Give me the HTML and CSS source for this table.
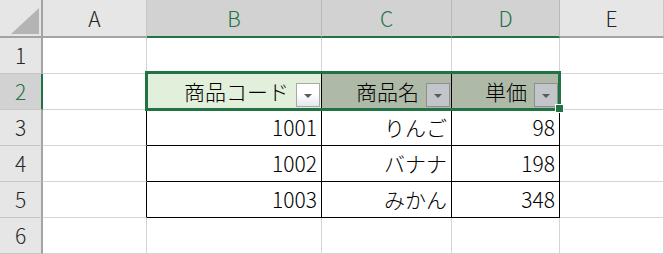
FILE: index.html
```html
<!DOCTYPE html>
<html lang="ja">
<head>
<meta charset="utf-8">
<link rel="stylesheet" href="styles.css">
</head>
<body>
<div class="sheet">
  <div class="grid">
    <div class="corner"><svg class="corner-tri" width="41" height="36" viewBox="0 0 41 36"><polygon points="11,34 39,34 39,8" fill="#b4b4b4"/></svg></div>
    <div class="ch">A</div>
    <div class="ch sel">B</div>
    <div class="ch sel">C</div>
    <div class="ch sel">D</div>
    <div class="ch">E</div>

    <div class="rh">1</div>
    <div class="c"></div><div class="c"></div><div class="c"></div><div class="c"></div><div class="c"></div>

    <div class="rh rsel">2</div>
    <div class="c"></div>
    <div class="c hd act bk-r"><span>商品コード</span><span class="fbtn light"><svg width="8" height="4" viewBox="0 0 8 4"><polygon points="0,0 8,0 4,4" fill="#5a5a5a"/></svg></span></div>
    <div class="c hd ov bk-r"><span>商品名</span><span class="fbtn"><svg width="8" height="4" viewBox="0 0 8 4"><polygon points="0,0 8,0 4,4" fill="#5a5a5a"/></svg></span></div>
    <div class="c hd ov"><span>単価</span><span class="fbtn"><svg width="8" height="4" viewBox="0 0 8 4"><polygon points="0,0 8,0 4,4" fill="#5a5a5a"/></svg></span></div>
    <div class="c"></div>

    <div class="rh">3</div>
    <div class="c bk-r"></div>
    <div class="c num tb">1001</div>
    <div class="c num tb">りんご</div>
    <div class="c num tb">98</div>
    <div class="c"></div>

    <div class="rh">4</div>
    <div class="c bk-r"></div>
    <div class="c num tb">1002</div>
    <div class="c num tb">バナナ</div>
    <div class="c num tb">198</div>
    <div class="c"></div>

    <div class="rh">5</div>
    <div class="c bk-r"></div>
    <div class="c num tb">1003</div>
    <div class="c num tb">みかん</div>
    <div class="c num tb">348</div>
    <div class="c"></div>

    <div class="rh">6</div>
    <div class="c"></div><div class="c"></div><div class="c"></div><div class="c"></div><div class="c"></div>
  </div>
  <div class="selection"></div>
  <div class="handle"></div>
</div>
</body>
</html>
```
FILE: styles.css
```css
html, body {
  margin: 0;
  padding: 0;
  background: #ffffff;
  overflow: hidden;
}

.sheet {
  position: relative;
  width: 664px;
  height: 254px;
  font-family: "Noto Sans CJK JP", "Noto Sans", sans-serif;
  font-weight: 300;
  font-size: 21px;
  color: #000;
}

.grid {
  display: grid;
  grid-template-columns: 43px 104px 175px 130px 108px 104px;
  grid-template-rows: 38px repeat(6, 36px);
}

.grid > div {
  box-sizing: border-box;
}

.corner {
  background: #e6e6e6;
  border-right: 2px solid #a3a3a3;
  border-bottom: 2px solid #a3a3a3;
}

.corner-tri {
  display: block;
}

.ch {
  background: #e6e6e6;
  border-right: 1px solid #c6c6c6;
  border-bottom: 2px solid #a3a3a3;
  display: flex;
  align-items: center;
  justify-content: center;
  color: #262626;
  line-height: 1;
}

.ch.sel {
  background: #d2d2d2;
  color: #217346;
  border-bottom-color: #217346;
  border-right-color: #b9b9b9;
}

.rh {
  background: #e6e6e6;
  border-right: 2px solid #a3a3a3;
  border-bottom: 1px solid #c6c6c6;
  display: flex;
  align-items: center;
  justify-content: center;
  color: #262626;
  line-height: 1;
}

.rh.rsel {
  background: #d2d2d2;
  color: #217346;
  border-right-color: #217346;
}

.c {
  border-right: 1px solid #d4d4d4;
  border-bottom: 1px solid #d4d4d4;
  display: flex;
  align-items: center;
  justify-content: flex-end;
  line-height: 1;
}

.num {
  padding-right: 4px;
}

.tb {
  border-right-color: #000;
  border-bottom-color: #000;
}

.bk-r {
  border-right-color: #000;
}

.hd {
  gap: 7px;
  color: #000;
  padding-right: 1px;
}

.act {
  background: #e2efda;
}

.ov {
  background: #aebaa7;
}

.fbtn {
  box-sizing: border-box;
  width: 24px;
  height: 24px;
  align-self: flex-end;
  margin-bottom: 2px;
  border: 1px solid #8e8e8e;
  background: #c2c5c9;
  display: flex;
  align-items: center;
  justify-content: center;
}

.fbtn svg {
  display: block;
  margin-top: 2px;
}

.fbtn.light {
  border-color: #a8a8a8;
  background: linear-gradient(#ffffff 0%, #ffffff 45%, #e4e9ee 100%);
}

.selection {
  position: absolute;
  left: 145px;
  top: 71px;
  width: 416px;
  height: 40px;
  box-sizing: border-box;
  border: 3px solid #217346;
  pointer-events: none;
}

.handle {
  position: absolute;
  left: 555px;
  top: 104px;
  width: 7px;
  height: 7px;
  background: #217346;
  border: 1px solid #ffffff;
}
```
